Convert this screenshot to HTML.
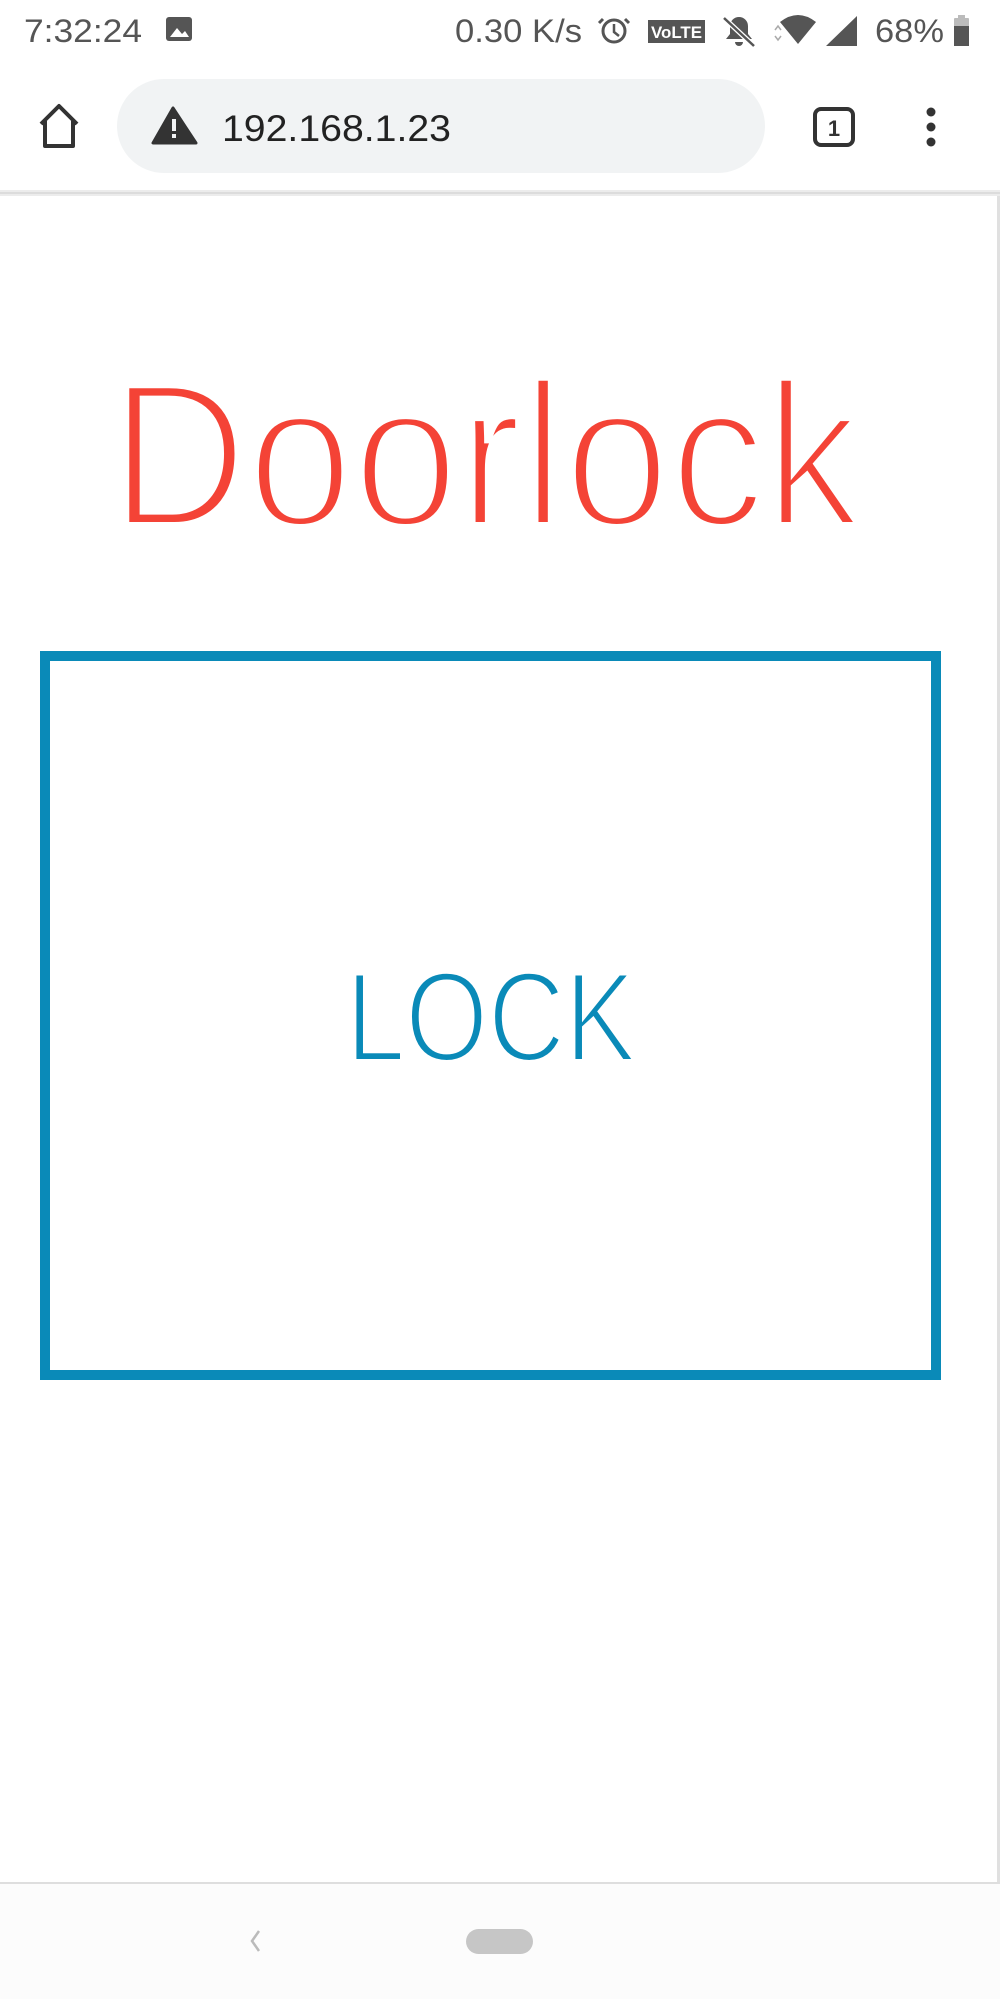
<!DOCTYPE html>
<html><head><meta charset="utf-8"><style>
html,body{margin:0;padding:0;background:#fff;}
body{width:1000px;height:1999px;position:relative;overflow:hidden;font-family:"Liberation Sans",sans-serif;}
.abs{position:absolute;}
</style></head><body>
<svg class="abs" style="left:0;top:0" width="1000" height="1999" viewBox="0 0 1000 1999">
  <rect x="0" y="190" width="1000" height="6" fill="#ececec"/>
  <rect x="0" y="192" width="1000" height="2" fill="#dcdcdc"/>
  <rect x="997" y="196" width="3" height="1687" fill="#e0e0e0"/>
  <text x="24" y="42" font-size="32" fill="#555" textLength="118" lengthAdjust="spacingAndGlyphs">7:32:24</text>
  <rect x="166" y="17" width="26" height="24" rx="3" fill="#555"/>
  <path d="M170 37 l7 -9 l5 6 l3 -3 l4 6 z" fill="#fff"/>
  <text x="455" y="42" font-size="32" fill="#555" textLength="127" lengthAdjust="spacingAndGlyphs">0.30 K/s</text>
  <circle cx="614" cy="31" r="11" fill="none" stroke="#555" stroke-width="3"/>
  <path d="M614 24 v8 l5 4" fill="none" stroke="#555" stroke-width="2.5"/>
  <path d="M603 19 l-4 4 M625 19 l4 4" stroke="#555" stroke-width="3"/>
  <rect x="648" y="20" width="57" height="23" fill="#555"/>
  <text x="651" y="38" font-size="17" font-weight="bold" fill="#fff" textLength="51" lengthAdjust="spacingAndGlyphs">VoLTE</text>
  <path d="M726 39 h26 l-4 -5 v-8 a9 9 0 0 0 -18 0 v8 z M735 42 h8 a4 4 0 0 1 -8 0z" fill="#555"/>
  <path d="M724 18 l30 28" stroke="#fff" stroke-width="5"/>
  <path d="M724 18 l30 28" stroke="#555" stroke-width="2.5"/>
  <path d="M780 22 q18 -14 36 0 l-18 22 z" fill="#555"/>
  <path d="M775 30 l3 -4 l3 4 M775 36 l3 4 l3 -4" stroke="#aaa" stroke-width="1.5" fill="none"/>
  <path d="M826 46 l31 -30 v30 z" fill="#555"/>
  <text x="875" y="42" font-size="32" fill="#555" textLength="69" lengthAdjust="spacingAndGlyphs">68%</text>
  <rect x="958" y="15" width="7" height="4" fill="#bbb"/>
  <rect x="954" y="18" width="15" height="28" rx="1" fill="#bbb"/>
  <rect x="954" y="26" width="15" height="20" fill="#555"/>
  <path d="M41 124 L59 106 L77 124 M45 121 V146 H73 V121" fill="none" stroke="#333" stroke-width="4" stroke-linejoin="round"/>
  <rect x="117" y="79" width="648" height="94" rx="47" fill="#f1f3f4"/>
  <path d="M173 108 L153 143 H196 Z" fill="#333" stroke="#333" stroke-width="3" stroke-linejoin="round"/>
  <rect x="172" y="119" width="4" height="12" fill="#f1f3f4"/>
  <rect x="172" y="134" width="4" height="4" fill="#f1f3f4"/>
  <text x="222" y="141" font-size="37" fill="#222" textLength="229" lengthAdjust="spacingAndGlyphs">192.168.1.23</text>
  <rect x="815" y="109" width="38" height="36" rx="6" fill="none" stroke="#333" stroke-width="4"/>
  <text x="834" y="136" font-size="22" font-weight="bold" fill="#333" text-anchor="middle">1</text>
  <circle cx="931" cy="112" r="4.5" fill="#333"/>
  <circle cx="931" cy="127" r="4.5" fill="#333"/>
  <circle cx="931" cy="142" r="4.5" fill="#333"/>
  <text x="110" y="526" font-size="206" fill="#f44336" stroke="#fff" stroke-width="8" textLength="750" lengthAdjust="spacingAndGlyphs">Doorlock</text>
  <rect x="45" y="656" width="891" height="719" fill="none" stroke="#0a8ab8" stroke-width="10"/>
  <text x="346" y="1061" font-size="127" fill="#0a8ab8" stroke="#fff" stroke-width="4" textLength="290" lengthAdjust="spacingAndGlyphs">LOCK</text>
  <rect x="0" y="1882" width="1000" height="117" fill="#fcfcfc"/>
  <rect x="0" y="1882" width="1000" height="2" fill="#dedede"/>
  <path d="M259 1931 l-7 10 l7 10" fill="none" stroke="#bbb" stroke-width="2.5"/>
  <rect x="466" y="1929" width="67" height="25" rx="12.5" fill="#c6c6c6"/>
</svg>
</body></html>
